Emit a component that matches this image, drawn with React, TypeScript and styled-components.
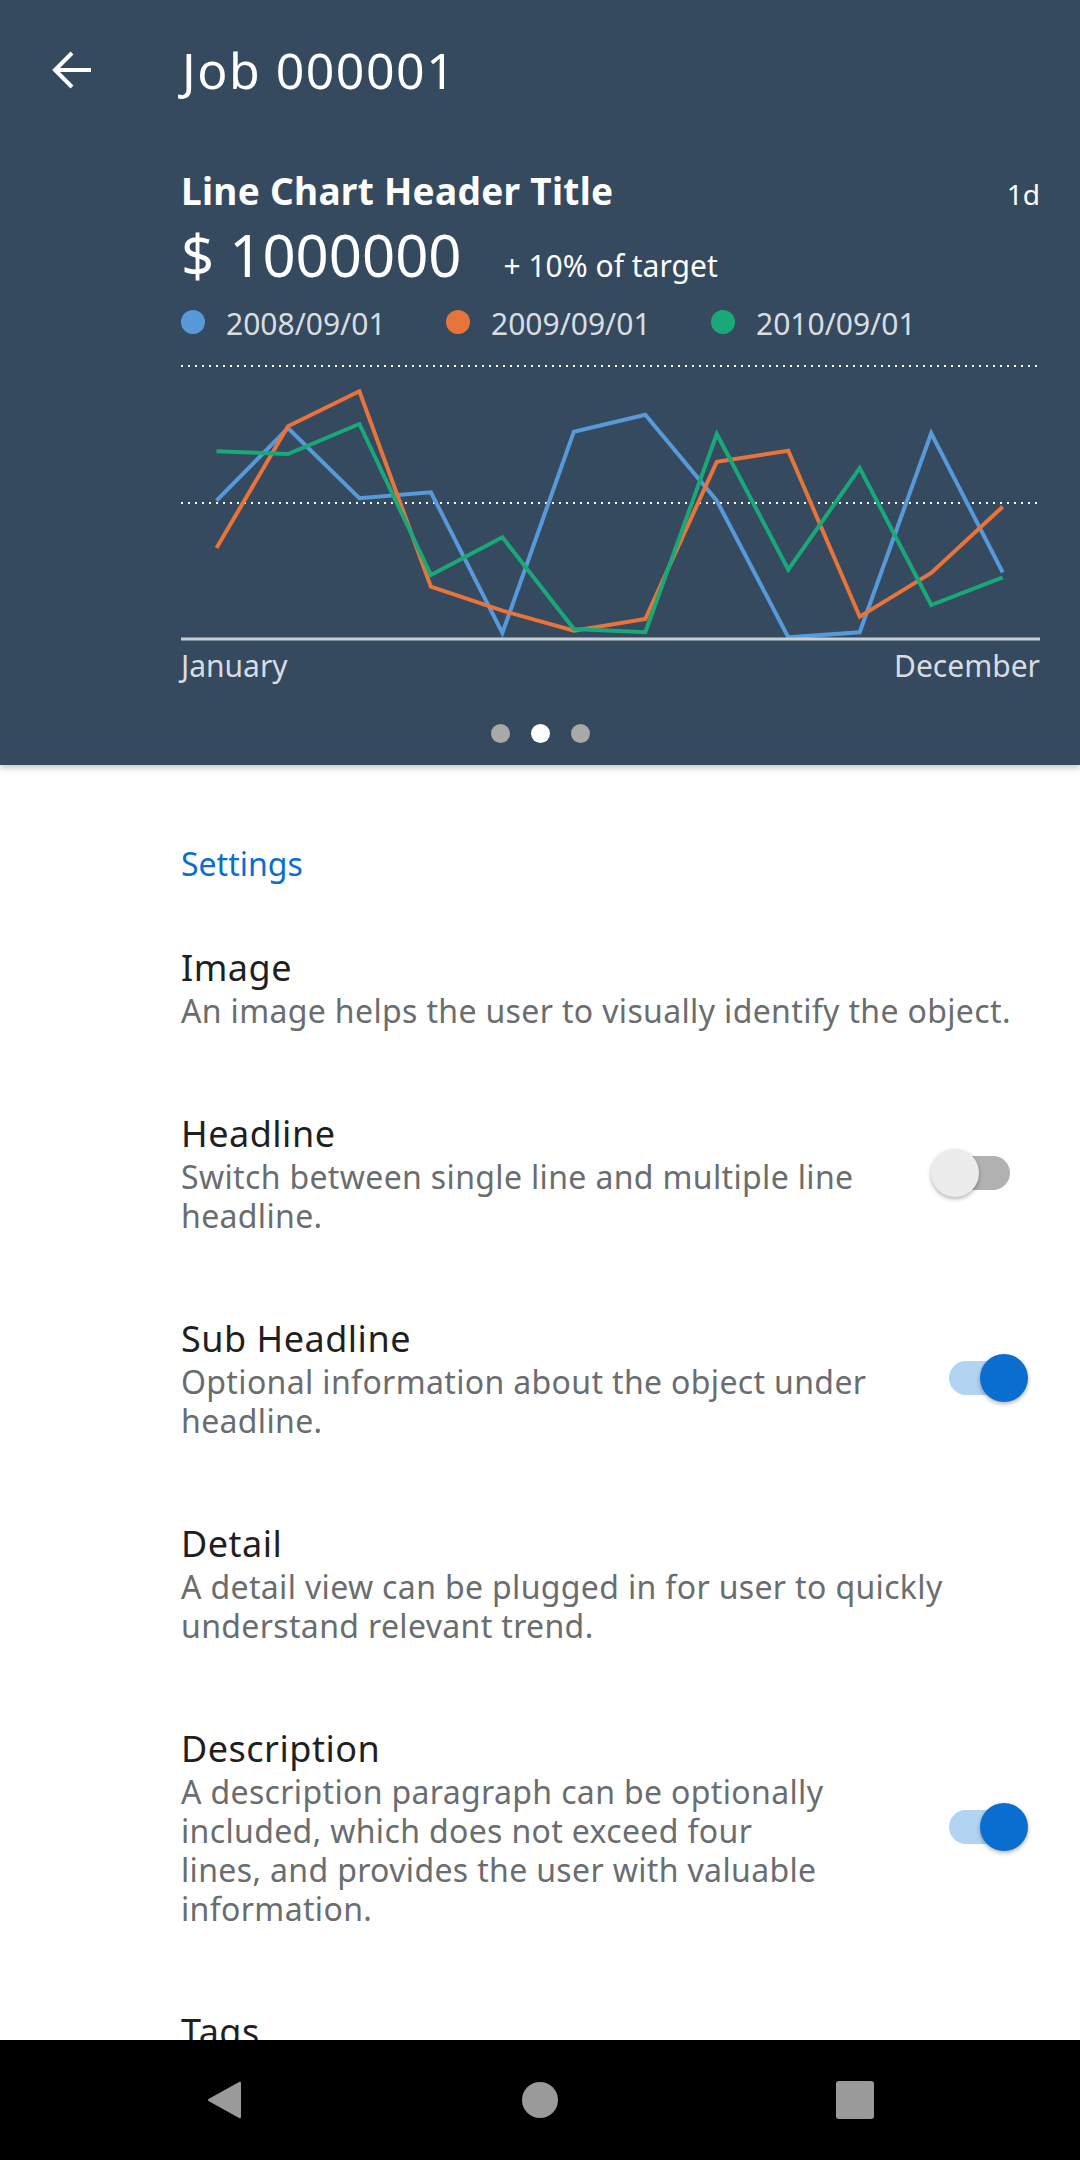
import React from 'react';
import styled, { createGlobalStyle } from 'styled-components';

const GlobalStyle = createGlobalStyle`
  html, body {
    margin: 0;
    padding: 0;
    background: #ffffff;
  }
  body {
    font-family: "Noto Sans", "Open Sans", "Liberation Sans", sans-serif;
  }
`;

const Screen = styled.div`
  width: 1080px;
  height: 2160px;
  display: flex;
  flex-direction: column;
  overflow: hidden;
  background: #ffffff;
`;

const Header = styled.header`
  height: 765px;
  flex-shrink: 0;
  background: #354a5f;
  display: flex;
  flex-direction: column;
  position: relative;
  z-index: 1;
  box-shadow: 0 3px 6px rgba(0, 0, 0, 0.22);
`;

const Toolbar = styled.div`
  height: 140px;
  display: flex;
  align-items: center;
  gap: 91px;
  padding-left: 51px;
`;

const BackButton = styled.button`
  width: 40px;
  height: 38px;
  padding: 0;
  border: none;
  background: none;
  display: flex;
`;

const ToolbarTitle = styled.h1`
  margin: 0;
  font-size: 50px;
  font-weight: 400;
  letter-spacing: 1.5px;
  line-height: 56px;
  color: #ffffff;
`;

const ChartCard = styled.section`
  display: flex;
  flex-direction: column;
  padding: 29px 40px 0 181px;
`;

const CardTitleRow = styled.div`
  height: 44px;
  display: flex;
  align-items: baseline;
  justify-content: space-between;
  line-height: 44px;
`;

const CardTitle = styled.h2`
  margin: 0;
  font-size: 37px;
  font-weight: 700;
  letter-spacing: 0.3px;
  color: #ffffff;
`;

const Period = styled.span`
  font-size: 28px;
  color: #ffffff;
`;

const KpiRow = styled.div`
  margin-top: 8px;
  height: 68px;
  line-height: 68px;
  display: flex;
  align-items: baseline;
`;

const KpiValue = styled.span`
  font-size: 58px;
  color: #ffffff;
`;

const KpiNote = styled.span`
  margin-left: 42px;
  font-size: 30px;
  color: #ffffff;
`;

const Legend = styled.div`
  margin-top: 17px;
  height: 36px;
  line-height: 36px;
  display: flex;
  align-items: center;
`;

const LegendItem = styled.div`
  width: 265px;
  display: flex;
  align-items: center;
  gap: 21px;
`;

const LegendDot = styled.span<{ $color: string }>`
  width: 24px;
  height: 24px;
  margin-bottom: 4px;
  border-radius: 50%;
  background: ${(p) => p.$color};
`;

const LegendLabel = styled.span`
  font-size: 30px;
  color: #d9dde1;
`;

const ChartSvg = styled.svg`
  display: block;
  margin-top: 17px;
`;

const AxisRow = styled.div`
  height: 36px;
  line-height: 36px;
  display: flex;
  justify-content: space-between;
  font-size: 30px;
  color: #d9dde1;
`;

const Pager = styled.div`
  margin-top: 40px;
  display: flex;
  justify-content: center;
  gap: 21px;
`;

const PagerDot = styled.span<{ $active?: boolean }>`
  width: 19px;
  height: 19px;
  border-radius: 50%;
  background: ${(p) => (p.$active ? '#ffffff' : '#a9a9a9')};
`;

const Content = styled.main`
  flex: 1;
  overflow: hidden;
  padding-top: 79px;
`;

const SectionLabel = styled.div`
  padding-left: 181px;
  margin-bottom: 61px;
  font-size: 32px;
  line-height: 40px;
  color: #0a6ed1;
`;

const SettingRow = styled.div`
  display: flex;
  align-items: center;
  padding: 0 52px 0 181px;
  margin-bottom: 81px;
`;

const SettingText = styled.div`
  flex: 1;
  min-width: 0;
`;

const SettingTitle = styled.div`
  font-size: 36px;
  letter-spacing: 0.5px;
  line-height: 46px;
  color: #1f1f1f;
`;

const SettingLine = styled.span`
  display: block;
  white-space: nowrap;
  font-size: 32px;
  letter-spacing: 0.35px;
  line-height: 39px;
  color: #6a6d70;
`;

const Switch = styled.div`
  position: relative;
  flex-shrink: 0;
  width: 97px;
  height: 48px;
`;

const SwitchTrack = styled.span<{ $on: boolean }>`
  position: absolute;
  top: 7px;
  left: ${(p) => (p.$on ? '18px' : '7px')};
  width: 72px;
  height: 34px;
  border-radius: 17px;
  background: ${(p) => (p.$on ? '#b2d3f2' : '#b1b1b1')};
`;

const SwitchThumb = styled.span<{ $on: boolean }>`
  position: absolute;
  top: 0;
  left: ${(p) => (p.$on ? '49px' : '0')};
  width: 48px;
  height: 48px;
  border-radius: 50%;
  background: ${(p) => (p.$on ? '#0a6ed1' : '#ececec')};
  box-shadow: 0 2px 4px rgba(0, 0, 0, 0.3);
`;

const NavBar = styled.nav`
  height: 120px;
  flex-shrink: 0;
  background: #000000;
  display: flex;
  align-items: center;
  padding: 0 67px;
`;

const NavCell = styled.div`
  flex: 1;
  display: flex;
  justify-content: center;
  align-items: center;
`;

const NavHome = styled.span`
  width: 36px;
  height: 36px;
  border-radius: 50%;
  background: #9a9a9a;
`;

const NavRecents = styled.span`
  width: 38px;
  height: 38px;
  border-radius: 3px;
  background: #9a9a9a;
`;

const CHART_W = 859;
const CHART_H = 289;

const series = [
  { color: '#5899da', label: '2008/09/01', values: [141.7, 69, 139.3, 133.3, 274, 72.7, 55.7, 141.7, 278.3, 273.3, 74.3, 213.3] },
  { color: '#e8743b', label: '2009/09/01', values: [189, 67.3, 32.3, 227.7, 251.7, 271.7, 260, 102.7, 91.7, 257.7, 214, 147.7] },
  { color: '#19a979', label: '2010/09/01', values: [92.3, 95, 65, 216, 178.3, 270, 273.3, 75, 210.7, 109, 246, 218.3] },
];

const toPoints = (values: number[]) =>
  values.map((y, i) => `${(35.5 + i * 71.47).toFixed(1)},${y}`).join(' ');

interface Setting {
  title: string;
  lines: string[];
  toggle?: boolean;
}

const settings: Setting[] = [
  { title: 'Image', lines: ['An image helps the user to visually identify the object.'] },
  { title: 'Headline', lines: ['Switch between single line and multiple line', 'headline.'], toggle: false },
  { title: 'Sub Headline', lines: ['Optional information about the object under', 'headline.'], toggle: true },
  { title: 'Detail', lines: ['A detail view can be plugged in for user to quickly', 'understand relevant trend.'] },
  {
    title: 'Description',
    lines: [
      'A description paragraph can be optionally',
      'included, which does not exceed four',
      'lines, and provides the user with valuable',
      'information.',
    ],
    toggle: true,
  },
  { title: 'Tags', lines: ['Tags help the user to categorize the object.'] },
];

const BackArrow = () => (
  <svg width="40" height="38" viewBox="0 0 40 38" fill="none" stroke="#ffffff" strokeWidth="4">
    <path d="M40 19H4" />
    <path d="M21 2L4 19l17 17" />
  </svg>
);

const LineChart = () => (
  <ChartSvg width={CHART_W} height={CHART_H} viewBox={`0 0 ${CHART_W} ${CHART_H}`}>
    <line x1="0" y1="7" x2={CHART_W} y2="7" stroke="#ffffff" strokeWidth="2" strokeDasharray="2 5" />
    <line x1="0" y1="144" x2={CHART_W} y2="144" stroke="#ffffff" strokeWidth="2" strokeDasharray="2 5" />
    {series.map((s) => (
      <polyline
        key={s.label}
        points={toPoints(s.values)}
        fill="none"
        stroke={s.color}
        strokeWidth="4"
        strokeLinejoin="miter"
      />
    ))}
    <line x1="0" y1="280" x2={CHART_W} y2="280" stroke="#c8cdd2" strokeWidth="3" />
  </ChartSvg>
);

const App: React.FC = () => {
  return (
    <>
      <GlobalStyle />
      <Screen>
        <Header>
          <Toolbar>
            <BackButton aria-label="Back">
              <BackArrow />
            </BackButton>
            <ToolbarTitle>Job 000001</ToolbarTitle>
          </Toolbar>

          <ChartCard>
            <CardTitleRow>
              <CardTitle>Line Chart Header Title</CardTitle>
              <Period>1d</Period>
            </CardTitleRow>
            <KpiRow>
              <KpiValue>$ 1000000</KpiValue>
              <KpiNote>+ 10% of target</KpiNote>
            </KpiRow>
            <Legend>
              {series.map((s) => (
                <LegendItem key={s.label}>
                  <LegendDot $color={s.color} />
                  <LegendLabel>{s.label}</LegendLabel>
                </LegendItem>
              ))}
            </Legend>
            <LineChart />
            <AxisRow>
              <span>January</span>
              <span>December</span>
            </AxisRow>
          </ChartCard>

          <Pager>
            <PagerDot />
            <PagerDot $active />
            <PagerDot />
          </Pager>
        </Header>

        <Content>
          <SectionLabel>Settings</SectionLabel>
          {settings.map((s) => (
            <SettingRow key={s.title}>
              <SettingText>
                <SettingTitle>{s.title}</SettingTitle>
                {s.lines.map((line) => (
                  <SettingLine key={line}>{line}</SettingLine>
                ))}
              </SettingText>
              {s.toggle !== undefined && (
                <Switch>
                  <SwitchTrack $on={s.toggle} />
                  <SwitchThumb $on={s.toggle} />
                </Switch>
              )}
            </SettingRow>
          ))}
        </Content>

        <NavBar>
          <NavCell>
            <svg width="36" height="40" viewBox="0 0 36 40">
              <path d="M33 1.5 L34 2.5 V37.5 L33 38.5 L1.5 21 Q0 20 1.5 19 Z" fill="#9a9a9a" />
            </svg>
          </NavCell>
          <NavCell>
            <NavHome />
          </NavCell>
          <NavCell>
            <NavRecents />
          </NavCell>
        </NavBar>
      </Screen>
    </>
  );
};

export default App;
